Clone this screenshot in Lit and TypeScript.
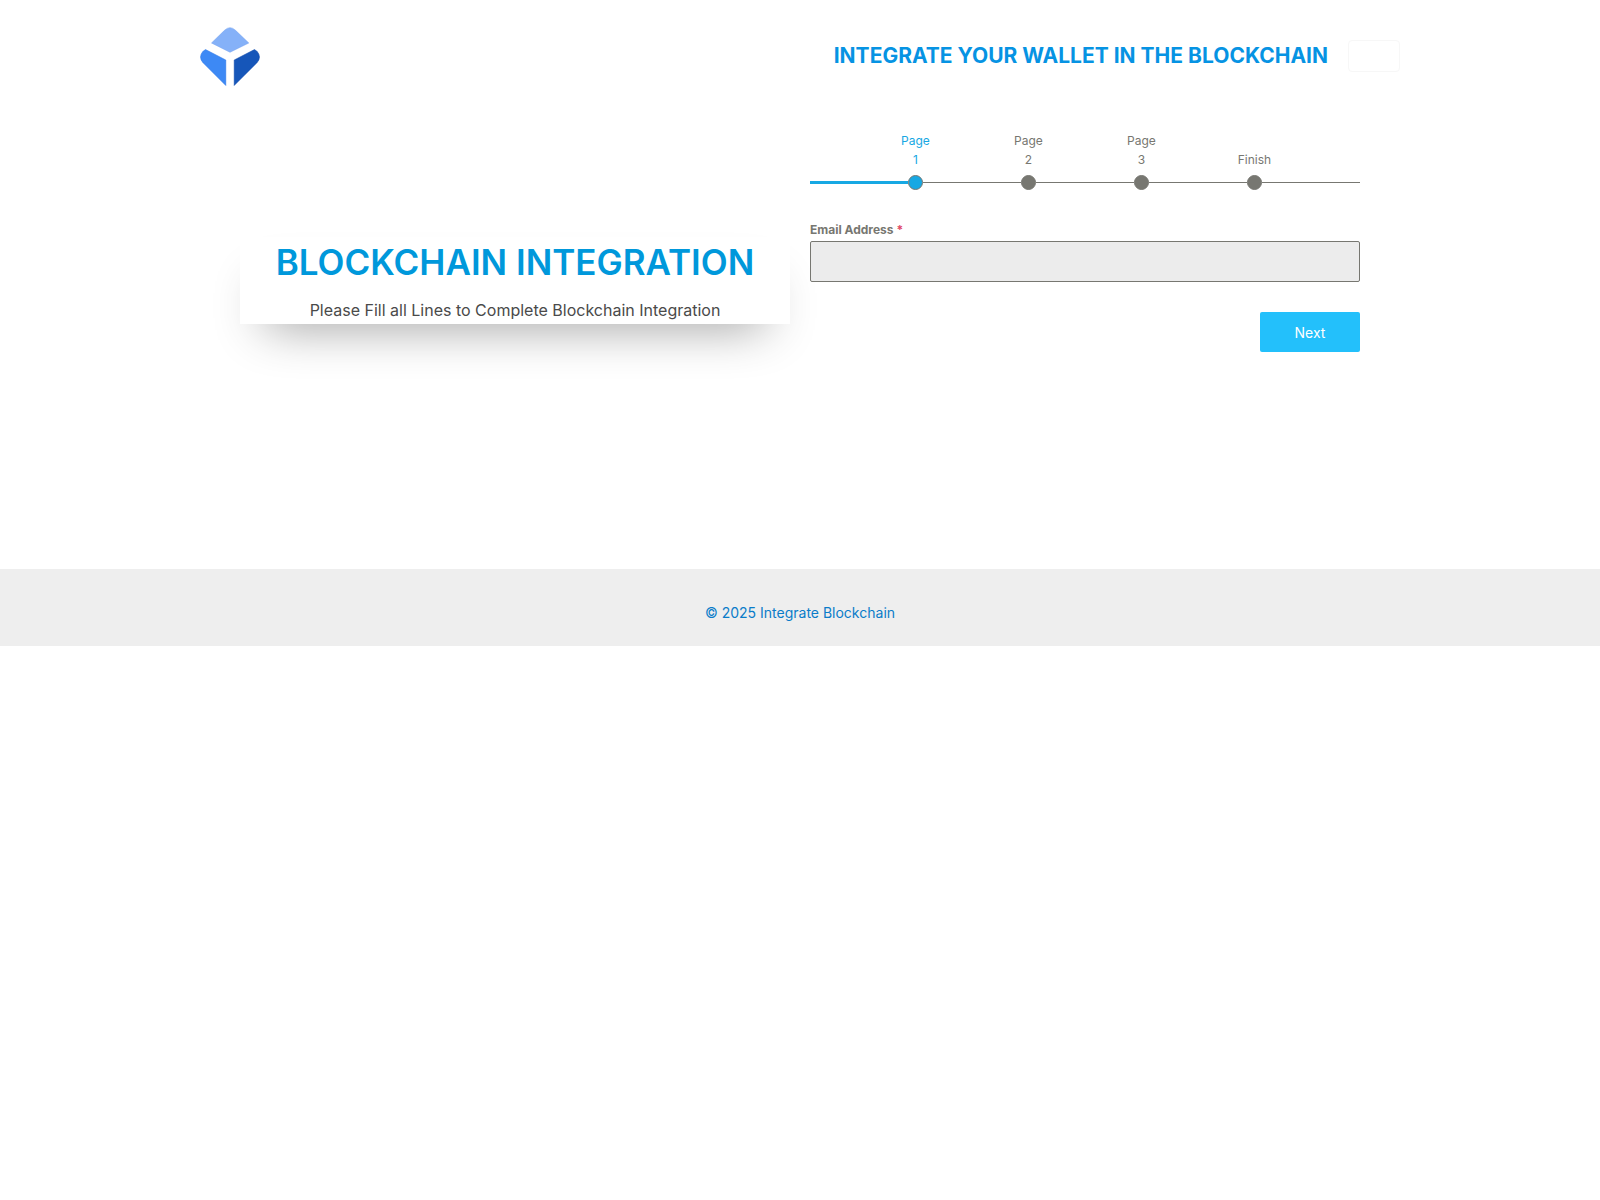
import { LitElement, html, css } from "lit";
import { customElement, state } from "lit/decorators.js";
import { classMap } from "lit/directives/class-map.js";

const STEPS = ["Page 1", "Page 2", "Page 3", "Finish"];

@customElement("site-header")
class SiteHeader extends LitElement {
  static styles = css`
    :host {
      display: block;
    }
    .bar {
      display: flex;
      align-items: center;
      justify-content: space-between;
      max-width: 1200px;
      min-height: 112px;
      margin: 0 auto;
    }
    .logo {
      display: block;
      width: 60px;
      height: 60px;
    }
    .logo svg {
      display: block;
    }
    .actions {
      display: flex;
      align-items: center;
      gap: 20px;
    }
    .title {
      color: #0693e3;
      font-size: 21px;
      font-weight: 700;
      line-height: 32px;
      text-decoration: none;
    }
    .action {
      width: 52px;
      height: 32px;
      padding: 0;
      border: 1px solid #f7f7f7;
      border-radius: 4px;
      background: #fff;
    }
  `;

  render() {
    return html`
      <header class="bar">
        <a class="logo" href="#" aria-label="Home">
          <svg width="60" height="60" viewBox="0 0 60 60" aria-hidden="true">
            <path fill="#85b1f8" stroke="#6f9ff0" stroke-width=".5" d="M11.500 17 24.500 4.300Q30 -1 35.500 4.300L48.800 17 30 26.300Z" />
            <path fill="#3d89f5" stroke="#2b74e4" stroke-width=".5" d="M5.500 23.500 25.800 34V59.500L2.800 36.500Q-1.800 31 2.800 25.500Z" />
            <path fill="#1656b9" stroke="#0d47a8" stroke-width=".5" d="M54.500 23.500 34.200 34V59.500L57.200 36.500Q61.800 31 57.200 25.500Z" />
          </svg>
        </a>
        <div class="actions">
          <a class="title" href="#">INTEGRATE YOUR WALLET IN THE BLOCKCHAIN</a>
          <button class="action" type="button" aria-label="Menu"></button>
        </div>
      </header>
    `;
  }
}

@customElement("step-progress")
class StepProgress extends LitElement {
  static properties = { current: { type: Number } };
  declare current: number;

  constructor() {
    super();
    this.current = 0;
  }

  static styles = css`
    :host {
      display: block;
    }
    .steps {
      display: flex;
      align-items: flex-end;
      margin: 0;
      padding: 0;
      list-style: none;
      color: #777771;
      font-size: 12px;
      line-height: 19px;
      text-align: center;
    }
    .link {
      flex: 1;
      height: 15px;
      display: flex;
      align-items: center;
    }
    .link::before {
      content: "";
      flex: 1;
      height: 1px;
      background: #777771;
    }
    .link.done::before {
      height: 3px;
      background: #17a8e3;
    }
    .step {
      display: flex;
      flex-direction: column;
      align-items: center;
      gap: 6px;
      width: 15px;
    }
    .label {
      display: block;
      width: 34px;
    }
    .dot {
      box-sizing: border-box;
      width: 15px;
      height: 15px;
      border: 1px solid #777771;
      border-radius: 50%;
      background: #777771;
    }
    .active {
      color: #17a8e3;
    }
    .active .dot {
      background: #17a8e3;
    }
  `;

  render() {
    return html`
      <ol class="steps">
        ${STEPS.map(
          (name, i) => html`
            <li class=${classMap({ link: true, done: i <= this.current })} role="presentation"></li>
            <li class=${classMap({ step: true, active: i <= this.current })}>
              <span class="label">${name}</span>
              <span class="dot"></span>
            </li>
          `
        )}
        <li class="link" role="presentation"></li>
      </ol>
    `;
  }
}

@customElement("wallet-form")
class WalletForm extends LitElement {
  @state() private step = 0;

  static styles = css`
    :host {
      display: block;
    }
    .form {
      display: flex;
      flex-direction: column;
    }
    .field {
      display: flex;
      flex-direction: column;
      gap: 1px;
      margin-top: 30px;
    }
    .label {
      color: #777771;
      font-size: 12px;
      font-weight: 700;
      line-height: 20px;
    }
    .required {
      color: #e04562;
    }
    .input {
      box-sizing: border-box;
      width: 100%;
      height: 41px;
      padding: 9px;
      border: 1px solid #777771;
      border-radius: 2px;
      background: #ececec;
      color: #000;
      font: inherit;
    }
    .next {
      align-self: flex-end;
      width: 100px;
      height: 40px;
      margin-top: 30px;
      border: 0;
      border-radius: 2px;
      background: #23c0fb;
      color: #fff;
      font-family: inherit;
      font-size: 14px;
      cursor: pointer;
    }
  `;

  private next(e: Event) {
    e.preventDefault();
    this.step = Math.min(this.step + 1, STEPS.length - 1);
  }

  render() {
    return html`
      <form class="form" @submit=${this.next}>
        <step-progress .current=${this.step}></step-progress>
        <div class="field">
          <label class="label" for="email">Email Address <span class="required">*</span></label>
          <input class="input" id="email" type="email" name="email" required />
        </div>
        <button class="next" type="submit">Next</button>
      </form>
    `;
  }
}

@customElement("app-root")
class AppRoot extends LitElement {
  static styles = css`
    :host {
      display: block;
      color: #4b4f58;
      font-family: Inter, "Liberation Sans", sans-serif;
      font-size: 16px;
    }
    .main {
      box-sizing: border-box;
      display: grid;
      grid-template-columns: 1fr 1fr;
      align-items: start;
      gap: 20px;
      max-width: 1200px;
      min-height: 457px;
      margin: 0 auto;
      padding: 19px 40px;
    }
    .intro {
      display: flex;
      flex-direction: column;
      gap: 11px;
      margin-top: 106px;
      padding-bottom: 2px;
      background: #fff;
      box-shadow: 0 25px 50px -25px rgba(0, 0, 0, 0.45);
      text-align: center;
    }
    .heading {
      margin: 0;
      color: #0098db;
      font-size: 35px;
      font-weight: 600;
      line-height: 50px;
    }
    .text {
      margin: 0;
      color: #4a4a4a;
      line-height: 24px;
    }
    .footer {
      padding: 31px 20px 20px;
      background: #eee;
      color: #0a7cc9;
      font-size: 14px;
      line-height: 26px;
      text-align: center;
    }
  `;

  render() {
    return html`
      <site-header></site-header>
      <main class="main">
        <section class="intro">
          <h1 class="heading">BLOCKCHAIN INTEGRATION</h1>
          <p class="text">Please Fill all Lines to Complete Blockchain Integration</p>
        </section>
        <wallet-form></wallet-form>
      </main>
      <footer class="footer">© 2025 Integrate Blockchain</footer>
    `;
  }
}
